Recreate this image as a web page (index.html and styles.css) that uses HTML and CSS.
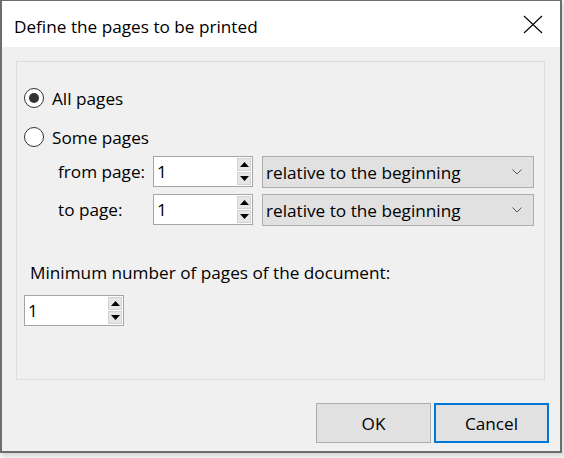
FILE: index.html
```html
<!DOCTYPE html>
<html>
<head>
<meta charset="utf-8">
<link rel="stylesheet" href="styles.css">
</head>
<body>
<div class="dialog">
  <div class="titlebar">
    <span class="title">Define the pages to be printed</span>
    <svg class="close" width="20" height="19" viewBox="0 0 20 19"><path d="M1 1 L19 18 M19 1 L1 18" stroke="#000" stroke-width="1.1" fill="none"/></svg>
  </div>
  <div class="content">
    <div class="group">
      <div class="radio-row first">
        <span class="radio checked"></span>
        <span class="label">All pages</span>
      </div>
      <div class="radio-row second">
        <span class="radio"></span>
        <span class="label">Some pages</span>
      </div>
      <div class="range">
        <span class="range-label">from page:</span>
        <div class="spin">
          <span class="spin-value">1</span>
          <div class="spin-buttons">
            <span class="spin-btn"><svg width="9" height="5" viewBox="0 0 9 5"><path d="M0 5 L4.5 0 L9 5 Z" fill="#000"/></svg></span>
            <span class="spin-btn"><svg width="9" height="5" viewBox="0 0 9 5"><path d="M0 0 L4.5 5 L9 0 Z" fill="#000"/></svg></span>
          </div>
        </div>
        <div class="combo">
          <span>relative to the beginning</span>
          <svg width="10" height="6" viewBox="0 0 10 6"><path d="M0.5 0.5 L5 5 L9.5 0.5" stroke="#555" stroke-width="1" fill="none"/></svg>
        </div>
        <span class="range-label">to page:</span>
        <div class="spin">
          <span class="spin-value">1</span>
          <div class="spin-buttons">
            <span class="spin-btn"><svg width="9" height="5" viewBox="0 0 9 5"><path d="M0 5 L4.5 0 L9 5 Z" fill="#000"/></svg></span>
            <span class="spin-btn"><svg width="9" height="5" viewBox="0 0 9 5"><path d="M0 0 L4.5 5 L9 0 Z" fill="#000"/></svg></span>
          </div>
        </div>
        <div class="combo">
          <span>relative to the beginning</span>
          <svg width="10" height="6" viewBox="0 0 10 6"><path d="M0.5 0.5 L5 5 L9.5 0.5" stroke="#555" stroke-width="1" fill="none"/></svg>
        </div>
      </div>
      <div class="min-label">Minimum number of pages of the document:</div>
      <div class="spin min-spin">
        <span class="spin-value">1</span>
        <div class="spin-buttons">
          <span class="spin-btn"><svg width="9" height="5" viewBox="0 0 9 5"><path d="M0 5 L4.5 0 L9 5 Z" fill="#000"/></svg></span>
          <span class="spin-btn"><svg width="9" height="5" viewBox="0 0 9 5"><path d="M0 0 L4.5 5 L9 0 Z" fill="#000"/></svg></span>
        </div>
      </div>
    </div>
    <div class="buttons">
      <button class="btn">OK</button>
      <button class="btn default">Cancel</button>
    </div>
  </div>
</div>
</body>
</html>
```
FILE: styles.css
```css
html, body {
  margin: 0;
  padding: 0;
  background: #f4f4f4;
  width: 564px;
  height: 458px;
  overflow: hidden;
}
body {
  font-family: "Open Sans", "Noto Sans", sans-serif;
  font-size: 17.2px;
  color: #000;
}
.dialog {
  width: 558px;
  height: 450px;
  border-top: 1px solid #6d6d6d;
  border-left: 2px solid #6d6d6d;
  border-right: 2px solid #6d6d6d;
  border-bottom: 2px solid #6d6d6d;
  background: #f0f0f0;
  box-shadow: 2px 3px 4px rgba(0,0,0,0.12);
  display: flex;
  flex-direction: column;
}
.titlebar {
  height: 46px;
  background: #fff;
  display: flex;
  align-items: center;
  justify-content: space-between;
  padding: 0 17px 0 12px;
}
.title {
  font-size: 17.2px;
  padding-top: 4px;
}
.close {
  display: block;
  margin-top: 1px;
}
.content {
  flex: 1;
  display: flex;
  flex-direction: column;
}
.group {
  margin: 14px 0 0 14px;
  width: 527px;
  height: 317px;
  border: 1px solid #dcdcdc;
  display: flex;
  flex-direction: column;
  align-items: flex-start;
}
.radio-row {
  display: flex;
  align-items: center;
  height: 20px;
  margin-left: 7px;
}
.radio-row.first { margin-top: 26px; }
.radio-row.second { margin-top: 19px; }
.radio {
  width: 18px;
  height: 18px;
  border: 1px solid #333;
  border-radius: 50%;
  background: #fff;
  display: flex;
  align-items: center;
  justify-content: center;
}
.radio.checked::after {
  content: "";
  width: 10px;
  height: 10px;
  border-radius: 50%;
  background: #333;
}
.label {
  margin-left: 8px;
}
.range {
  display: grid;
  grid-template-columns: 95px 109px 272px;
  grid-auto-rows: 32px;
  row-gap: 6px;
  margin: 9px 0 0 41px;
  align-items: center;
}
.range-label {
  line-height: 32px;
}
.spin {
  box-sizing: border-box;
  width: 100px;
  height: 31px;
  background: #fff;
  border: 1px solid #a5a5a5;
  display: flex;
  align-items: center;
  justify-content: space-between;
  padding: 0 1px 0 3px;
  align-self: start;
}
.spin-value {
  line-height: 29px;
}
.spin-buttons {
  display: flex;
  flex-direction: column;
  gap: 1px;
  width: 14px;
}
.spin-btn {
  box-sizing: border-box;
  height: 13px;
  background: #e6e6e6;
  border: 1px solid #d2d2d2;
  display: flex;
  align-items: center;
  justify-content: center;
}
.spin-btn svg { display: block; }
.combo {
  box-sizing: border-box;
  height: 32px;
  background: #e1e1e1;
  border: 1px solid #adadad;
  display: flex;
  align-items: center;
  justify-content: space-between;
  padding: 0 11px 0 3px;
}
.combo svg { display: block; }
.min-label {
  margin: 36px 0 0 13px;
  line-height: 22px;
}
.min-spin {
  margin: 11px 0 0 7px;
}
.buttons {
  display: flex;
  justify-content: flex-end;
  gap: 3px;
  margin-top: 23px;
  padding-right: 11px;
}
.btn {
  box-sizing: border-box;
  width: 115px;
  height: 40px;
  background: #e1e1e1;
  border: 1px solid #adadad;
  font-family: "Open Sans", "Noto Sans", sans-serif;
  font-size: 17.2px;
  color: #000;
  padding: 0;
}
.btn.default {
  border: 2px solid #0078d7;
}
```
